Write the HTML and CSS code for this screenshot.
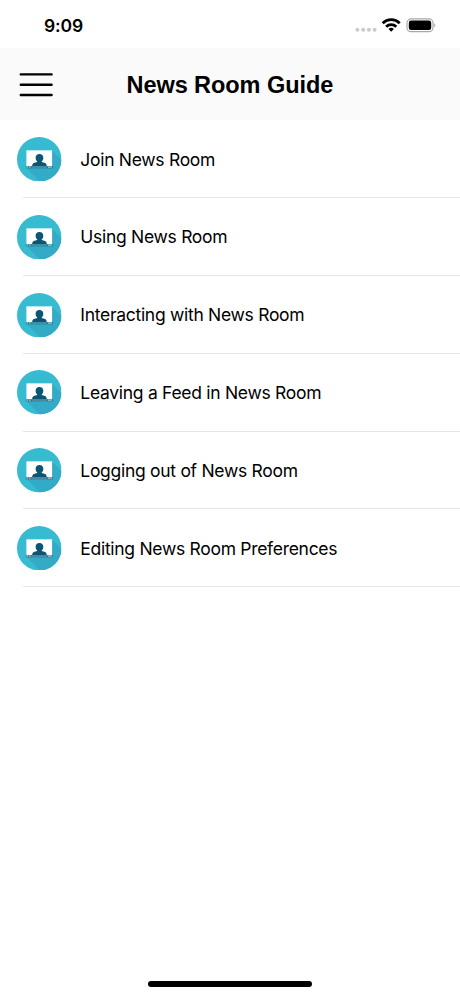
FILE: index.html
```html
<!DOCTYPE html>
<html lang="en">
<head>
<meta charset="utf-8">
<title>News Room Guide</title>
<link rel="stylesheet" href="styles.css">
</head>
<body>
<svg class="defs" aria-hidden="true">
  <defs>
    <clipPath id="disc"><circle cx="22" cy="22" r="22"/></clipPath>
    <symbol id="room" viewBox="0 0 44 44">
      <circle cx="22" cy="22" r="22" fill="#36bbd1"/>
      <path clip-path="url(#disc)" d="M35 14L52 31V52H30L10 31Z" fill="#33abc7"/>
      <rect x="9.3" y="13.2" width="25.4" height="15.8" fill="#fff"/>
      <path d="M22.2 16.8c2.4 0 3.8 1.6 3.8 3.9 0 1.6-.6 2.6-1.5 3.4v.5l3.3 1.1c1.1.4 1.6 1.6 1.7 3.3H14.9c.1-1.7.6-2.9 1.7-3.3l3.3-1.1v-.5c-.9-.8-1.5-1.8-1.5-3.4 0-2.3 1.4-3.9 3.8-3.9z" fill="#0b5675"/>
      <rect x="8.7" y="29" width="26.6" height="1.9" fill="#1c6480"/>
      <path d="M9.3 29.8h1.8M12 29.8h1.6M30.5 29.8h4" stroke="#d9eef3" stroke-width=".9"/>
      <path d="M14.5 29.8h15" stroke="#8dbccb" stroke-width=".7"/>
    </symbol>
  </defs>
</svg>
<div class="status">
  <span class="time">9:09</span>
  <svg class="indicators" width="82" height="18" viewBox="0 0 82 18">
    <g fill="#cbcbcb"><circle cx="3.4" cy="13.8" r="2"/><circle cx="9.2" cy="13.8" r="2"/><circle cx="14.9" cy="13.8" r="2"/><circle cx="20.6" cy="13.8" r="2"/></g>
    <g transform="translate(.5 0)">
      <g fill="none" stroke="#000" stroke-width="2.8"><path d="M28.2 7.2a12.1 12.1 0 0 1 17 0"/><path d="M31.6 10.8a7.3 7.3 0 0 1 10.2 0"/></g>
      <path d="M36.7 15.8l-2.7-2.7a3.8 3.8 0 0 1 5.4 0z"/>
    </g>
    <rect x="53" y="2.9" width="26" height="12.8" rx="4" fill="none" stroke="#a8a8a8" stroke-width="1.2"/>
    <rect x="54.8" y="4.6" width="22.4" height="9.4" rx="2.3"/>
    <path d="M80.2 7.3c1.4.7 1.4 3.3 0 4z" fill="#a8a8a8"/>
  </svg>
</div>
<header class="bar">
  <svg width="34" height="24" viewBox="0 0 34 24" stroke="#000" stroke-width="2.4" stroke-linecap="round"><path d="M1.8 1.4H32.6M1.8 11.7H32.6M1.8 22H32.6"/></svg>
  <h1>News Room Guide</h1>
</header>
<ul class="list">
  <li><svg class="icon"><use href="#room"/></svg><span class="label">Join News Room</span></li>
  <li><svg class="icon"><use href="#room"/></svg><span class="label">Using News Room</span></li>
  <li><svg class="icon"><use href="#room"/></svg><span class="label">Interacting with News Room</span></li>
  <li><svg class="icon"><use href="#room"/></svg><span class="label">Leaving a Feed in News Room</span></li>
  <li><svg class="icon"><use href="#room"/></svg><span class="label">Logging out of News Room</span></li>
  <li><svg class="icon"><use href="#room"/></svg><span class="label">Editing News Room Preferences</span></li>
</ul>
<div class="home"></div>
</body>
</html>
```
FILE: styles.css
```css
* { box-sizing: border-box; }
body {
  margin: 0;
  height: 996px;
  display: flex;
  flex-direction: column;
  background: #fff;
  color: #000;
  font-family: Inter, "Liberation Sans", sans-serif;
  overflow: hidden;
}
.defs { position: absolute; width: 0; height: 0; }
.status {
  height: 48px;
  padding: 16px 24px 0 44px;
  display: flex;
  justify-content: space-between;
  align-items: flex-start;
}
.time { font-size: 17.5px; font-weight: 600; line-height: 20px; letter-spacing: -0.1px; }
.bar {
  height: 72px;
  padding: 2px 0 0 19px;
  display: flex;
  align-items: center;
  background: #fafafa;
}
.bar h1 {
  margin: 0 0 0 73.5px;
  font: bold 23.5px/30px "Liberation Sans", Arial, sans-serif;
  letter-spacing: -0.06px;
  white-space: nowrap;
}
.list { margin: 0; padding: 0.35px 0 0; list-style: none; }
.list li {
  height: 77.8px;
  padding: 0 0 0 17px;
  display: flex;
  align-items: center;
  background: linear-gradient(#e6e6e6, #e6e6e6) 23px 100% / 100% 1px no-repeat;
}
.icon { width: 44.5px; height: 44.5px; margin-right: 18.8px; flex: none; }
.label {
  padding-top: 0.6px;
  font-size: 17.5px;
  line-height: 24px;
  letter-spacing: -0.29px;
  white-space: nowrap;
}
.home {
  width: 164px;
  height: 5.6px;
  margin: auto auto 9px;
  border-radius: 3px;
  background: #000;
}
```
